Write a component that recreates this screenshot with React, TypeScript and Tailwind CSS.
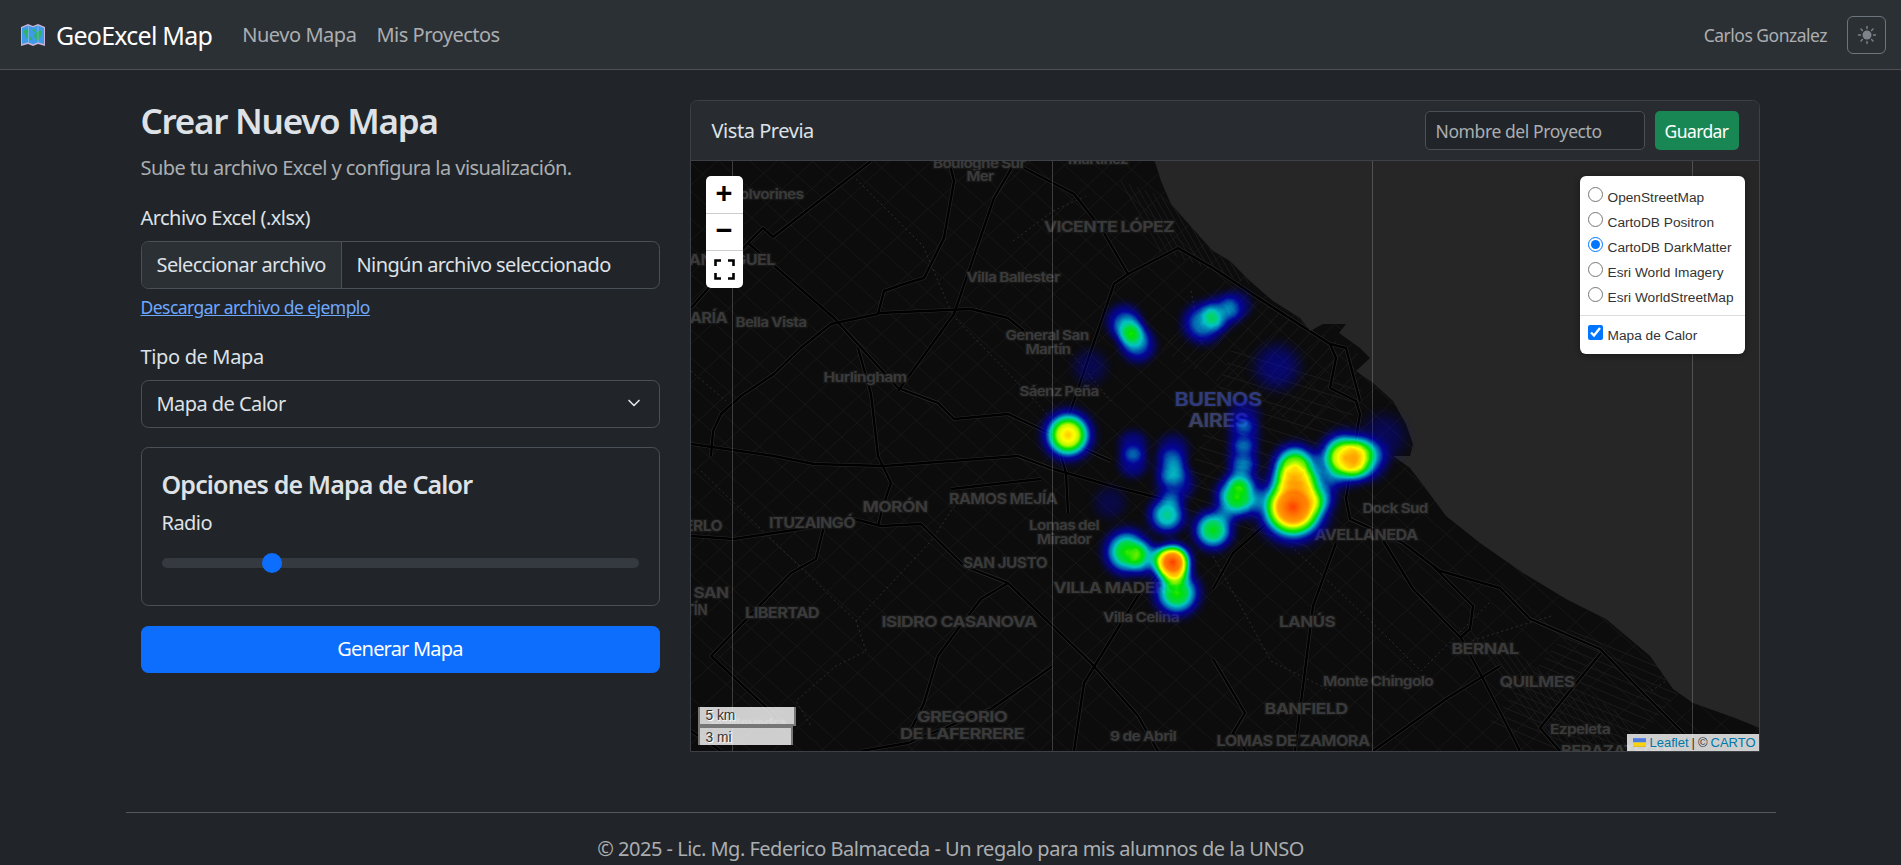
import { ChevronDown } from 'lucide-react';

const HIGHWAYS = [
  '20,295 22,270 30,253 50,235 83,213 110,187 140,163 187,153 193,130 213,123 233,117 253,77 263,20 258,0',
  '187,152 280,148 317,157 333,170',
  '57,82 143,157 207,227 247,242 263,258 317,253 360,273 420,300',
  '0,147 57,82 72,67 82,76 180,0',
  '207,230 263,153 303,37 320,8 327,0',
  '333,7 383,33 410,67 437,113 487,87 522,107 572,140 639,183 645,197 639,227 665,240 669,253 655,338 659,358 712,382 749,410 809,427 839,458 909,488 955,535 995,575 1015,590',
  '437,113 423,123 377,257 370,295 375,312 377,352',
  '167,187 180,233 187,295',
  '0,283 83,295 123,303 193,305 327,295 362,308 420,325 480,340',
  '0,375 43,378 110,368 163,358 190,365 230,363 273,405 317,422 400,502 447,555 467,590',
  '133,365 125,398 100,412 20,495 77,548 100,575',
  '317,422 290,438 267,468 247,495 233,542 217,575',
  '200,322 192,345 187,365',
  '187,295 200,322',
  '260,328 350,318',
  '362,505 300,548 217,582 170,590',
  '383,590 393,522 447,435 470,410',
  '522,428 542,392 575,363',
  '742,405 782,445 779,468 769,477',
  '685,368 722,428 770,477 789,512 829,590',
  '682,590 755,538 809,505',
  '645,382 622,445 604,590',
  '522,498 554,552 542,572 555,590',
  '910,492 887,520 849,567 869,590',
  '639,183 655,187 669,240',
  '0,570 30,590',
];

const RAILS = [
  '165,18 232,85 262,155 330,225 395,295',
  '322,80 362,50 395,35',
  '0,210 35,240',
  '10,310 165,460 175,490 145,505 105,540 120,565',
  '165,460 240,380 270,335',
  '600,385 690,470 730,510 800,440',
  '522,395 580,500 640,530',
  '860,455 780,480',
  '960,530 1020,490',
  '375,185 395,210 420,240',
  '500,130 510,180',
];

const LABELS: [string, number, number, number, number, string?][] = [
  ['Boulogne Sur', 288, 3, 92, 13],
  ['Mer', 289, 16, 27, 13],
  ['Martínez', 407, -1, 60, 13],
  ['Polvorines', 76, 34, 73, 13],
  ['Villa Ballester', 322, 117, 93, 13],
  ['Bella Vista', 80, 162, 71, 13],
  ['General San', 356, 175, 83, 13],
  ['Martín', 357, 189, 45, 13],
  ['Hurlingham', 174, 217, 83, 13],
  ['Sáenz Peña', 368, 231, 79, 13],
  ['Lomas del', 373, 365, 70, 13],
  ['Mirador', 373, 379, 54, 13],
  ['Villa Celina', 450, 457, 76, 13],
  ['9 de Abril', 452, 576, 66, 13],
  ['Dock Sud', 704, 348, 65, 13],
  ['Monte Chingolo', 687, 521, 110, 13],
  ['Ezpeleta', 889, 569, 60, 13],
  ['Pontevedra', 57, 563, 75, 13],
  ['VICENTE LÓPEZ', 418, 67, 130, 15],
  ['SAN MIGUEL', 36, 100, 96, 15],
  ['MARÍA', 10, 158, 52, 15],
  ['BUENOS', 527, 240, 87, 19, '#2f3b7c'],
  ['AIRES', 527, 261, 60, 19, '#3a3f66'],
  ['MORÓN', 204, 347, 65, 15],
  ['RAMOS MEJÍA', 312, 339, 108, 15],
  ['ITUZAINGÓ', 121, 363, 86, 15],
  ['MERLO', 5, 366, 52, 15],
  ['SAN JUSTO', 314, 403, 84, 15],
  ['VILLA MADERO', 425, 428, 125, 15],
  ['SAN', 20, 433, 35, 15],
  ['MARTÍN', -10, 450, 52, 15],
  ['LIBERTAD', 91, 453, 74, 15],
  ['ISIDRO CASANOVA', 268, 462, 155, 15],
  ['GREGORIO', 271, 557, 90, 15],
  ['DE LAFERRERE', 271, 574, 124, 15],
  ['AVELLANEDA', 675, 375, 103, 15],
  ['LANÚS', 616, 462, 56, 15],
  ['BERNAL', 794, 489, 67, 15],
  ['QUILMES', 846, 522, 75, 15],
  ['BANFIELD', 615, 549, 83, 15],
  ['LOMAS DE ZAMORA', 602, 581, 153, 15],
  ['BERAZATEGUI', 925, 591, 110, 15],
];

const HEAT: [number, number, number, number][] = [
  [377, 274, 36, 0.84],
  [433, 161, 26, 0.48],
  [447, 184, 26, 0.5],
  [440, 172, 24, 0.34],
  [512, 162, 30, 0.56],
  [531, 151, 26, 0.42],
  [546, 144, 22, 0.32],
  [586, 206, 34, 0.3],
  [399, 206, 26, 0.22],
  [442, 284, 22, 0.36],
  [442, 302, 22, 0.38],
  [482, 289, 24, 0.34],
  [480, 305, 24, 0.34],
  [484, 322, 28, 0.46],
  [476, 354, 28, 0.64],
  [553, 255, 24, 0.34],
  [553, 275, 24, 0.38],
  [552, 295, 24, 0.38],
  [552, 312, 24, 0.36],
  [546, 336, 32, 0.72],
  [522, 369, 30, 0.7],
  [436, 391, 34, 0.72],
  [459, 399, 26, 0.38],
  [482, 401, 28, 0.95],
  [486, 432, 34, 0.72],
  [602, 346, 50, 0.95],
  [604, 306, 34, 0.78],
  [654, 297, 38, 0.84],
  [676, 299, 30, 0.5],
  [692, 276, 34, 0.24],
  [419, 342, 24, 0.2],
  [630, 330, 28, 0.34],
];

const COAST =
  '463,-2 470,20 480,43 510,77 522,90 539,100 559,120 582,140 609,157 619,170 632,163 655,163 648,172 655,177 669,187 679,197 665,210 682,222 702,240 715,263 722,283 719,295 702,295 719,307 735,328 755,355 789,382 832,412 875,438 915,458 959,495 982,528 1002,542 1044,557 1071,568 1071,-2';

// street fabric: two diagonal families with uneven spacing, plus tighter blocks
function streets() {
  const lines: string[] = [];
  for (let i = -600; i < 1200; i += 22 + ((i * i) % 31 + 31) % 31) lines.push(`M${i},0 L${i + 660},590`);
  for (let i = 0; i < 1800; i += 26 + (i * 7) % 37) lines.push(`M${i},0 L${i - 640},590`);
  return lines.join(' ');
}

function denseStreets() {
  const lines: string[] = [];
  for (let i = 0; i < 14; i++) {
    lines.push(`M${780 + i * 11},${470 + i * 6} L${850 + i * 11},${570 + i * 6}`);
    lines.push(`M${800 + i * 6},${560 - i * 7} L${920 + i * 6},${610 - i * 7}`);
    lines.push(`M${535 + i * 11},${120 + i * 6} L${470 + i * 11},${190 + i * 6}`);
    lines.push(`M${540 - i * 4},${190 + i * 12} L${670 - i * 4},${230 + i * 12}`);
    lines.push(`M${430 + i * 8},${20 + i * 3} L${470 + i * 8},${90 + i * 3}`);
  }
  return lines.join(' ');
}

function BaseMap() {
  return (
    <svg width="1069" height="590" viewBox="0 0 1069 590" className="block">
      <defs>
        <clipPath id="land">
          <path d={`M0,0 L463,0 ${COAST.split(' ').slice(1, -1).map((p) => `L${p}`).join(' ')} L1069,590 L0,590 Z`} />
        </clipPath>
        <radialGradient id="blob">
          <stop offset="0" stopColor="#000" stopOpacity="1" />
          <stop offset="0.3" stopColor="#000" stopOpacity="0.92" />
          <stop offset="0.5" stopColor="#000" stopOpacity="0.72" />
          <stop offset="0.7" stopColor="#000" stopOpacity="0.38" />
          <stop offset="0.85" stopColor="#000" stopOpacity="0.12" />
          <stop offset="1" stopColor="#000" stopOpacity="0" />
        </radialGradient>
        <filter id="heat" x="0" y="0" width="1069" height="590" filterUnits="userSpaceOnUse" colorInterpolationFilters="sRGB">
          <feColorMatrix type="matrix" values="0 0 0 1 0  0 0 0 1 0  0 0 0 1 0  0 0 0 1 0" />
          <feComponentTransfer>
            <feFuncR type="table" tableValues="0 0 0 0 0 0 0 0 1 1 1" />
            <feFuncG type="table" tableValues="0 0 0 0 0 0.5 1 1 1 0.5 0" />
            <feFuncB type="table" tableValues="1 1 1 1 1 1 1 0 0 0 0" />
            <feFuncA type="table" tableValues="0 0.1 0.25 0.42 0.58 0.66 0.76 0.88 1 1 1" />
          </feComponentTransfer>
        </filter>
      </defs>

      <rect width="1069" height="590" fill="#0c0c0c" />
      <polygon points={COAST} fill="#262626" />

      <g clipPath="url(#land)" fill="none">
        <path d={streets()} stroke="#1b1b1b" strokeWidth="0.8" />
        <path d={denseStreets()} stroke="#1f1f1f" strokeWidth="0.8" />
        {RAILS.map((p) => (
          <polyline key={p} points={p} stroke="#2e2e2e" strokeWidth="1" strokeDasharray="2 3" />
        ))}
        {HIGHWAYS.map((p) => (
          <polyline key={p} points={p} stroke="#2a2a2a" strokeWidth="3.6" strokeLinejoin="round" />
        ))}
        {HIGHWAYS.map((p) => (
          <polyline key={`in-${p}`} points={p} stroke="#000" strokeWidth="2.4" strokeLinejoin="round" />
        ))}
      </g>

      <g textAnchor="middle" dominantBaseline="middle" fontFamily="Inter, 'Open Sans', sans-serif" fontWeight="700" fill="#3a3a3a" stroke="#161616" strokeWidth="2.5" paintOrder="stroke">
        {LABELS.map(([text, x, y, w, size, tint]) => (
          <text key={text + x} x={x} y={y} fontSize={size} textLength={w} lengthAdjust="spacingAndGlyphs" fill={tint}>
            {text}
          </text>
        ))}
      </g>

      {[41.5, 361.5, 681.5, 1001.5].map((x) => (
        <line key={x} x1={x} x2={x} y1="0" y2="590" stroke="#fff" strokeOpacity="0.2" />
      ))}

      <g filter="url(#heat)">
        {HEAT.map(([x, y, r, v]) => (
          <circle key={`${x}-${y}`} cx={x} cy={y} r={r} fill="url(#blob)" opacity={v} />
        ))}
      </g>
    </svg>
  );
}

function LayerControl() {
  const layers = ['OpenStreetMap', 'CartoDB Positron', 'CartoDB DarkMatter', 'Esri World Imagery', 'Esri WorldStreetMap'];
  return (
    <div className="absolute top-[15px] right-[14px] w-[165px] h-[178px] bg-white rounded-[6px] shadow-[0_1px_6px_rgba(0,0,0,0.4)] font-['Liberation_Sans',Arial,sans-serif] text-[13.7px] tracking-normal text-[#333]">
      <div className="pt-[8px] px-[8px]">
        {layers.map((name) => (
          <label key={name} className="flex items-start gap-[5px] h-[25px] leading-[25px] whitespace-nowrap">
            <input type="radio" name="base" defaultChecked={name === 'CartoDB DarkMatter'} className="w-[15px] h-[15px] mt-[3px] ml-0 accent-[#0075ff]" />
            <span className="mt-[1px]">{name}</span>
          </label>
        ))}
      </div>
      <div className="border-t border-[#ddd] mt-[6px] mb-[6px]" />
      <label className="flex items-start gap-[5px] h-[25px] leading-[25px] px-[8px]">
        <input type="checkbox" defaultChecked className="w-[15px] h-[15px] mt-[3px] ml-0 accent-[#0075ff]" />
        <span className="mt-[1px]">Mapa de Calor</span>
      </label>
    </div>
  );
}

function ZoomControl() {
  return (
    <div className="absolute top-[15px] left-[15px] w-[37px] rounded-[5px] overflow-hidden bg-white text-black font-['Liberation_Mono',monospace] tracking-normal">
      <div className="h-[37.5px] pt-[3px] border-b border-[#ccc] flex items-center justify-center text-[29px] font-bold">+</div>
      <div className="h-[37.5px] pt-[2px] border-b border-[#ccc] flex items-center justify-center text-[29px] font-bold">−</div>
      <div className="h-[37px] flex items-center justify-center">
        <svg width="21" height="21" viewBox="0 0 21 21" fill="none" stroke="#000" strokeWidth="2.6">
          <path d="M1.5 7V1.5H7M14 1.5H19.5V7M19.5 14V19.5H14M7 19.5H1.5V14" />
        </svg>
      </div>
    </div>
  );
}

function ScaleBars() {
  return (
    <div className="absolute left-[7px] bottom-[6px] font-['Liberation_Sans',Arial,sans-serif] text-[13.75px] leading-[15px] tracking-normal text-[#333] [text-shadow:1px_1px_#fff]">
      <div className="w-[98px] h-[19px] pl-[6px] pt-[1px] bg-white/80 border-2 border-t-0 border-[#777]">5 km</div>
      <div className="w-[95px] h-[19px] pl-[6px] pt-[2px] bg-white/80 border-2 border-b-0 border-[#777]">3 mi</div>
    </div>
  );
}

function Attribution() {
  return (
    <div className="absolute right-0 bottom-0 h-[17px] w-[132px] flex items-center gap-[3px] pl-[6px] bg-white/80 font-['Liberation_Sans',Arial,sans-serif] text-[13px] leading-[17px] tracking-normal text-[#333] whitespace-nowrap">
      <svg width="13" height="9" viewBox="0 0 12 8" className="mr-[1px]">
        <path fill="#4C7BE1" d="M0 0h12v4H0z" />
        <path fill="#FFD500" d="M0 4h12v3H0z" />
        <path fill="#E0BC00" d="M0 7h12v1H0z" />
      </svg>
      <span className="text-[#0078a8]">Leaflet</span>
      <span>|</span>
      <span>©</span>
      <span className="text-[#0078a8]">CARTO</span>
    </div>
  );
}

export default function App() {
  return (
    <div className="h-[865px] overflow-hidden bg-[#212529] text-[#dee2e6] text-[20px] leading-[30px] tracking-[-0.55px] font-['Noto_Sans','Open_Sans',sans-serif]">
      {/* Navbar */}
      <nav className="h-[70px] bg-[#2b3035] border-b border-[#4d5154] pl-[20px] pr-[15px] flex items-center">
        <svg width="26" height="24" viewBox="0 0 26 24" className="mr-[10px]">
          <path fill="#c9b3d6" d="M1 4l7-3 5 2 5-2 7 3v19l-7-2-5 2-5-2-7 2z" />
          <path fill="#3f9be8" d="M2 5l6-2.6 5 1.9 5-1.9L24 5v16l-6-1.8-5 2-5-2-6 1.8z" />
          <path fill="#2fb26a" d="M4 7l4-1 1 3-2 2 1 3-2 1-1-3-1-2zM12 7l3-1 1 2-2 1zM15 10l5-3 2 2-1 4-2 1v3l-2 1-1-3-2-1zM10 14l2 0 0 3-2 0z" />
          <path fill="#a8c8ea" d="M8 2.5h1v17H8zM17.5 2.5h1v17h-1z" opacity="0.5" />
        </svg>
        <span className="text-[25px] text-white mr-[30px] tracking-[-0.75px]">GeoExcel Map</span>
        <a className="text-[#abaeb1] mr-[20px] tracking-[-0.45px]">Nuevo Mapa</a>
        <a className="text-[#abaeb1] tracking-[-0.5px]">Mis Proyectos</a>
        <span className="ml-auto text-[#abaeb1] mr-[20px] text-[17.5px] tracking-[-0.5px]">Carlos Gonzalez</span>
        <button className="w-[39px] h-[38px] border border-[#6c757d] rounded-[6px] flex items-center justify-center">
          <svg width="20" height="20" viewBox="0 0 20 20" stroke="#7d8388" strokeWidth="1.4" strokeLinecap="round">
            <circle cx="10" cy="10" r="4.5" fill="#7d8388" stroke="none" />
            <path d="M10 1.5v2M10 16.5v2M1.5 10h2M16.5 10h2M4 4l1.4 1.4M14.6 14.6L16 16M4 16l1.4-1.4M14.6 5.4L16 4" />
          </svg>
        </button>
      </nav>

      <main className="w-[1650px] mx-auto pt-[30px] flex">
        {/* Form column */}
        <section className="w-[549px] px-[15px]">
          <h2 className="text-[35px] leading-[42px] font-semibold tracking-[-1.25px]">Crear Nuevo Mapa</h2>
          <p className="text-[#abaeb1] mt-[11px] mb-[20px]">Sube tu archivo Excel y configura la visualización.</p>

          <label className="block mb-[8px]">Archivo Excel (.xlsx)</label>
          <div className="h-[48px] border border-[#495057] rounded-[7.5px] overflow-hidden flex">
            <div className="w-[200px] bg-[#2b3035] border-r border-[#495057] flex items-center pl-[15px] tracking-[-0.6px]">Seleccionar archivo</div>
            <div className="flex items-center pl-[15px] tracking-[-0.6px]">Ningún archivo seleccionado</div>
          </div>
          <a className="block text-[#6ea8fe] underline text-[17.5px] leading-[26px] mt-[5px] mb-[22px]">Descargar archivo de ejemplo</a>

          <label className="block mb-[8px] tracking-[-0.35px]">Tipo de Mapa</label>
          <div className="relative mb-[19px]">
            <select className="w-full h-[47.5px] appearance-none bg-transparent border border-[#495057] rounded-[7.5px] pl-[15px]">
              <option className="bg-[#212529]">Mapa de Calor</option>
            </select>
            <ChevronDown size={20} className="absolute right-[16px] top-[13px]" />
          </div>

          <div className="h-[159px] border border-[#495057] rounded-[7.5px] p-[20px] mb-[20px]">
            <h5 className="text-[25px] leading-[32px] font-semibold tracking-[-0.85px]">Opciones de Mapa de Calor</h5>
            <label className="block mt-[8px]">Radio</label>
            <input
              type="range"
              defaultValue={22}
              className="block w-full h-[20px] mt-[15px] appearance-none bg-transparent [&::-webkit-slider-runnable-track]:h-[10px] [&::-webkit-slider-runnable-track]:rounded-[10px] [&::-webkit-slider-runnable-track]:bg-[#343a40] [&::-webkit-slider-thumb]:appearance-none [&::-webkit-slider-thumb]:w-[20px] [&::-webkit-slider-thumb]:h-[20px] [&::-webkit-slider-thumb]:mt-[-5px] [&::-webkit-slider-thumb]:rounded-full [&::-webkit-slider-thumb]:bg-[#0d6efd]"
            />
          </div>

          <button className="w-full h-[47.5px] bg-[#0d6efd] text-white rounded-[7.5px] tracking-[-0.8px]">Generar Mapa</button>
        </section>

        {/* Preview card */}
        <section className="w-[1100px] px-[15px]">
          <div className="border border-[#3d4146] rounded-t-[7.5px]">
            <div className="h-[60px] bg-[#282c31] border-b border-[#3d4146] rounded-t-[7.5px] pl-[21px] pr-[20px] flex items-center justify-between">
              <span className="tracking-[-0.45px]">Vista Previa</span>
              <div className="flex gap-[10px]">
                <input
                  placeholder="Nombre del Proyecto"
                  className="w-[220px] h-[39px] bg-[#212529] border border-[#495057] rounded-[5px] px-[10px] text-[17.5px] tracking-[-0.4px] placeholder:text-[#abaeb1]"
                />
                <button className="w-[84px] h-[39px] bg-[#198754] text-white rounded-[5px] text-[17.5px] tracking-[-0.6px]">Guardar</button>
              </div>
            </div>
            <div className="relative h-[590px] overflow-hidden">
              <BaseMap />
              <ZoomControl />
              <LayerControl />
              <ScaleBars />
              <Attribution />
            </div>
          </div>
        </section>
      </main>

      {/* Footer */}
      <footer className="w-[1650px] mx-auto mt-[60px] border-t border-[#55585c] pt-[21px] text-center text-[#abaeb1] tracking-[-0.5px]">
        © 2025 - Lic. Mg. Federico Balmaceda - Un regalo para mis alumnos de la UNSO
      </footer>
    </div>
  );
}
